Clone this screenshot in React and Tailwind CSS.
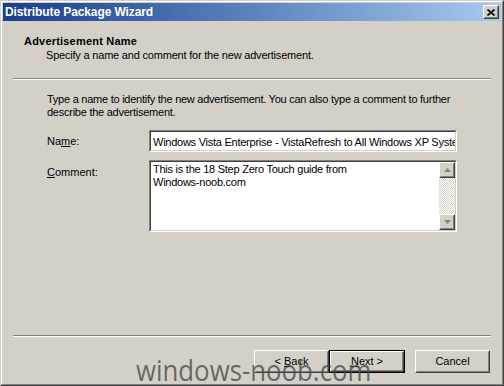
import React from "react";

const font = { fontFamily: '"Liberation Sans", Arial, sans-serif' };

function Raised({ className = "", children }) {
  return (
    <div className={`border border-t-white border-l-white border-r-[#404040] border-b-[#404040] bg-[#d4d0c8] ${className}`}>
      <div className="w-full h-full border border-t-[#d4d0c8] border-l-[#d4d0c8] border-r-[#808080] border-b-[#808080] flex items-center justify-center">
        {children}
      </div>
    </div>
  );
}

function Sunken({ className = "", children }) {
  return (
    <div className={`border border-t-[#808080] border-l-[#808080] border-r-white border-b-white ${className}`}>
      <div className="w-full h-full border border-t-[#404040] border-l-[#404040] border-r-[#d4d0c8] border-b-[#d4d0c8] bg-white flex">
        {children}
      </div>
    </div>
  );
}

function Separator({ className = "" }) {
  return (
    <div className={`h-[2px] border-t border-t-[#808080] border-b border-b-white ${className}`} />
  );
}

function Arrow({ up }) {
  return (
    <svg width="7" height="4" viewBox="0 0 7 4">
      <path d={up ? "M3.5 0 L7 4 L0 4 Z" : "M0 0 L7 0 L3.5 4 Z"} fill="#808080" />
    </svg>
  );
}

function Button({ label, mnemonic, def }) {
  const idx = mnemonic ? label.indexOf(mnemonic) : -1;
  const content =
    idx >= 0 ? (
      <>
        {label.slice(0, idx)}
        <span className="underline">{label[idx]}</span>
        {label.slice(idx + 1)}
      </>
    ) : (
      label
    );
  const inner = (
    <Raised className="w-full h-full">
      <span className="text-[11px] text-black">{content}</span>
    </Raised>
  );
  return def ? (
    <div className="w-[76px] h-[23px] border border-black">{inner}</div>
  ) : (
    <div className="w-[75px] h-[23px]">{inner}</div>
  );
}

export default function App() {
  return (
    <div
      className="relative w-[504px] h-[386px] overflow-hidden bg-[#d4d0c8] border-t border-l border-t-[#d4d0c8] border-l-[#d4d0c8] border-r border-b border-r-[#404040] border-b-[#404040]"
      style={font}
    >
      <div className="w-full h-full border border-t-white border-l-white border-r-[#808080] border-b-[#808080] p-px flex flex-col">
        {/* Title bar */}
        <div className="h-[18px] flex items-center justify-between pl-[2px] pr-[2px] bg-gradient-to-r from-[#1a3e8c] to-[#a6caf0]">
          <span className="text-white font-bold text-[12px] tracking-[-0.1px]">Distribute Package Wizard</span>
          <Raised className="w-[16px] h-[14px]">
            <svg width="8" height="7" viewBox="0 0 8 7">
              <path d="M0.5 0.5 L7.5 6.5 M7.5 0.5 L0.5 6.5" stroke="black" strokeWidth="1.6" />
            </svg>
          </Raised>
        </div>

        {/* Header */}
        <div className="pl-[21px] pt-[13px] h-[57px] text-[11px] text-black">
          <div className="font-bold leading-[14px] tracking-[0.2px]">Advertisement Name</div>
          <div className="pl-[22px] leading-[14px] tracking-[-0.2px]">Specify a name and comment for the new advertisement.</div>
        </div>
        <Separator className="ml-[10px] mr-[10px]" />

        {/* Body */}
        <div className="pl-[44px] pr-[44px] pt-[13px] text-[11px] text-black flex-1">
          <p className="leading-[13px] tracking-[-0.25px]">
            Type a name to identify the new advertisement. You can also type a comment to further describe the advertisement.
          </p>
          <div className="mt-[11px] flex items-center">
            <span className="w-[102px]">
              Na<span className="underline">m</span>e:
            </span>
            <Sunken className="w-[308px] h-[22px]">
              <span className="pl-[2px] pt-[2px] whitespace-nowrap overflow-hidden tracking-[-0.25px]">
                Windows Vista Enterprise - VistaRefresh to All Windows XP Systems
              </span>
            </Sunken>
          </div>
          <div className="mt-[8px] flex items-start">
            <span className="w-[102px] pt-[4px]">
              <span className="underline">C</span>omment:
            </span>
            <Sunken className="w-[308px] h-[72px]">
              <div className="flex-1 pl-[2px] pt-[1px] leading-[13px] tracking-[-0.25px]">
                This is the 18 Step Zero Touch guide from
                <br />
                Windows-noob.com
              </div>
              <div className="w-[16px] flex flex-col bg-[repeating-conic-gradient(#d4d0c8_0_25%,#ffffff_0_50%)] bg-[length:2px_2px]">
                <Raised className="w-[16px] h-[16px]">
                  <Arrow up />
                </Raised>
                <div className="flex-1" />
                <Raised className="w-[16px] h-[16px]">
                  <Arrow />
                </Raised>
              </div>
            </Sunken>
          </div>
        </div>

        {/* Footer */}
        <Separator className="ml-[10px] mr-[10px]" />
        <div className="h-[46px] flex items-start justify-end pt-[13px] pr-[11px]">
          <Button label="< Back" mnemonic="B" />
          <Button label="Next >" mnemonic="N" def />
          <div className="w-[10px]" />
          <Button label="Cancel" />
        </div>
      </div>

      {/* Watermark */}
      <div
        className="absolute left-[135px] top-[352px] text-[30px] leading-[34px] text-[#4a4a4a]/80 pointer-events-none origin-left scale-x-[0.86]"
        style={{ fontFamily: '"Open Sans", sans-serif' }}
      >
        windows-noob.com
      </div>
    </div>
  );
}
